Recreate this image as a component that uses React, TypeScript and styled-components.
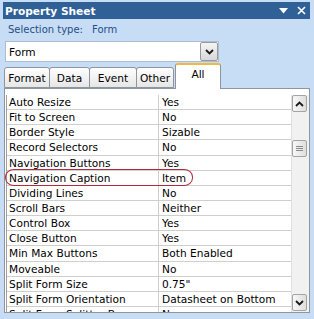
import React from 'react'
import styled, { createGlobalStyle } from 'styled-components'

const GlobalStyle = createGlobalStyle`
  html, body {
    margin: 0;
    padding: 0;
    background: #ffffff;
  }
  body {
    font-family: "DejaVu Sans", "Liberation Sans", sans-serif;
  }
`

const Window = styled.div`
  position: relative;
  width: 314px;
  height: 319px;
  box-sizing: border-box;
  background: #c6ddf5;
  padding: 2px 4px 0 3px;
  overflow: hidden;
`

const TitleBar = styled.div`
  display: flex;
  align-items: center;
  height: 17px;
  background: #2f6197;
  color: #ffffff;
  font-size: 10.6px;
  font-weight: bold;
  padding: 0 3px 0 2px;

  .title {
    flex: 1;
  }
`

const TitleButtons = styled.div`
  display: flex;
  gap: 9px;
  align-items: center;
  padding-right: 1px;
`

const SelectionType = styled.div`
  height: 20px;
  display: flex;
  align-items: center;
  color: #274d86;
  font-size: 10px;
  padding-left: 5px;

  span + span {
    margin-left: 9px;
  }
`

const Combo = styled.div`
  display: flex;
  align-items: center;
  width: 214px;
  height: 21px;
  box-sizing: border-box;
  margin: 2px 0 0 2px;
  background: #ffffff;
  border: 1px solid #a9bdd6;
  font-size: 10.6px;
  color: #000000;
  padding-left: 3px;

  .text {
    flex: 1;
  }
`

const DropButton = styled.div`
  width: 18px;
  height: 19px;
  box-sizing: border-box;
  border: 1px solid #9a9a9a;
  border-radius: 2px;
  background: linear-gradient(#f4f4f4, #d8d8d8);
  display: flex;
  align-items: center;
  justify-content: center;
`

const TabRow = styled.div`
  display: flex;
  align-items: flex-end;
  height: 25px;
  margin-top: 1px;
  padding-left: 1px;
`

const Tab = styled.div<{ $active?: boolean; $w: number }>`
  width: ${(p) => p.$w}px;
  height: ${(p) => (p.$active ? 26 : 21)}px;
  box-sizing: border-box;
  display: flex;
  align-items: center;
  justify-content: center;
  font-size: 10.6px;
  color: #000000;
  border: 1px solid #8e959c;
  border-bottom: ${(p) => (p.$active ? 'none' : '1px solid #8e959c')};
  border-top: ${(p) => (p.$active ? '2px solid #f2b73c' : '1px solid #8e959c')};
  border-radius: 3px 3px 0 0;
  background: ${(p) => (p.$active ? '#ffffff' : 'linear-gradient(#ffffff, #e6e6e6)')};
  margin-right: ${(p) => (p.$active ? 0 : -1)}px;
  margin-left: ${(p) => (p.$active ? 2 : 0)}px;
  padding-bottom: ${(p) => (p.$active ? 6 : 0)}px;
  position: relative;
  z-index: ${(p) => (p.$active ? 2 : 1)};
  margin-bottom: ${(p) => (p.$active ? -1 : 0)}px;
`

const Panel = styled.div`
  display: flex;
  height: 225px;
  box-sizing: border-box;
  background: #ffffff;
  border: 1px solid #8e959c;
  margin-left: 1px;
  padding: 6px 0 0 1px;
`

const Grid = styled.div`
  flex: 1;
  border-left: 1px solid #a0a0a0;
  overflow: hidden;
`

const Row = styled.div`
  display: grid;
  grid-template-columns: 151px 1fr;
  height: 14.15px;
  border-bottom: 1px solid #cfcfcf;
  font-size: 10.6px;
  line-height: 14px;
  color: #000000;
  white-space: nowrap;

  span {
    padding-left: 2px;
    overflow: hidden;
  }
  span + span {
    border-left: 1px solid #cfcfcf;
    padding-left: 3px;
  }
`

const ScrollBar = styled.div`
  width: 18px;
  display: flex;
  flex-direction: column;
  align-items: center;
  background: #f1f1f1;
  border-left: 1px solid #e0e0e0;
  padding: 0 2px 1px 0;
  box-sizing: border-box;
`

const ScrollButton = styled.div`
  width: 15px;
  height: 17px;
  box-sizing: border-box;
  border: 1px solid #a4a4a4;
  border-radius: 2px;
  background: linear-gradient(90deg, #f8f8f8, #dedede);
  display: flex;
  align-items: center;
  justify-content: center;
`

const Track = styled.div`
  flex: 1;
  width: 100%;
  display: flex;
  flex-direction: column;
  align-items: center;
  padding-top: 28px;
`

const Highlight = styled.div`
  position: absolute;
  left: 5px;
  top: 169px;
  width: 188px;
  height: 17px;
  box-sizing: border-box;
  border: 1.5px solid #b42a3a;
  border-radius: 9px / 8px;
  pointer-events: none;
`

const rows: [string, string][] = [
  ['Auto Resize', 'Yes'],
  ['Fit to Screen', 'No'],
  ['Border Style', 'Sizable'],
  ['Record Selectors', 'No'],
  ['Navigation Buttons', 'Yes'],
  ['Navigation Caption', 'Item'],
  ['Dividing Lines', 'No'],
  ['Scroll Bars', 'Neither'],
  ['Control Box', 'Yes'],
  ['Close Button', 'Yes'],
  ['Min Max Buttons', 'Both Enabled'],
  ['Moveable', 'No'],
  ['Split Form Size', '0.75"'],
  ['Split Form Orientation', 'Datasheet on Bottom'],
  ['Split Form Splitter Bar', 'No'],
]

const tabs = [
  { label: 'Format', w: 46 },
  { label: 'Data', w: 41 },
  { label: 'Event', w: 48 },
  { label: 'Other', w: 38 },
]

function Chevron({ up }: { up?: boolean }) {
  return (
    <svg width="9" height="6" viewBox="0 0 9 6">
      <path
        d={up ? 'M1 5 L4.5 1.5 L8 5' : 'M1 1 L4.5 4.5 L8 1'}
        fill="none"
        stroke="#1a1a1a"
        strokeWidth="1.8"
      />
    </svg>
  )
}

export default function App() {
  return (
    <>
      <GlobalStyle />
      <Window>
        <TitleBar>
          <span className="title">Property Sheet</span>
          <TitleButtons>
            <svg width="9" height="6" viewBox="0 0 9 6">
              <path d="M0 0 H9 L4.5 5.5 Z" fill="#ffffff" />
            </svg>
            <svg width="9" height="9" viewBox="0 0 9 9">
              <path d="M1 1 L8 8 M8 1 L1 8" stroke="#ffffff" strokeWidth="1.6" />
            </svg>
          </TitleButtons>
        </TitleBar>
        <SelectionType>
          <span>Selection type:</span>
          <span>Form</span>
        </SelectionType>
        <Combo>
          <span className="text">Form</span>
          <DropButton>
            <Chevron />
          </DropButton>
        </Combo>
        <TabRow>
          {tabs.map((t) => (
            <Tab key={t.label} $w={t.w}>
              {t.label}
            </Tab>
          ))}
          <Tab $active $w={46}>
            All
          </Tab>
        </TabRow>
        <Panel>
          <Grid>
            {rows.map(([label, value]) => (
              <Row key={label}>
                <span>{label}</span>
                <span>{value}</span>
              </Row>
            ))}
          </Grid>
          <ScrollBar>
            <ScrollButton>
              <Chevron up />
            </ScrollButton>
            <Track>
              <ScrollButton>
                <svg width="7" height="7" viewBox="0 0 7 7">
                  <path d="M0 1.5 H7 M0 3.5 H7 M0 5.5 H7" stroke="#8a8a8a" strokeWidth="1" />
                </svg>
              </ScrollButton>
            </Track>
            <ScrollButton>
              <Chevron />
            </ScrollButton>
          </ScrollBar>
        </Panel>
        <Highlight />
      </Window>
    </>
  )
}
